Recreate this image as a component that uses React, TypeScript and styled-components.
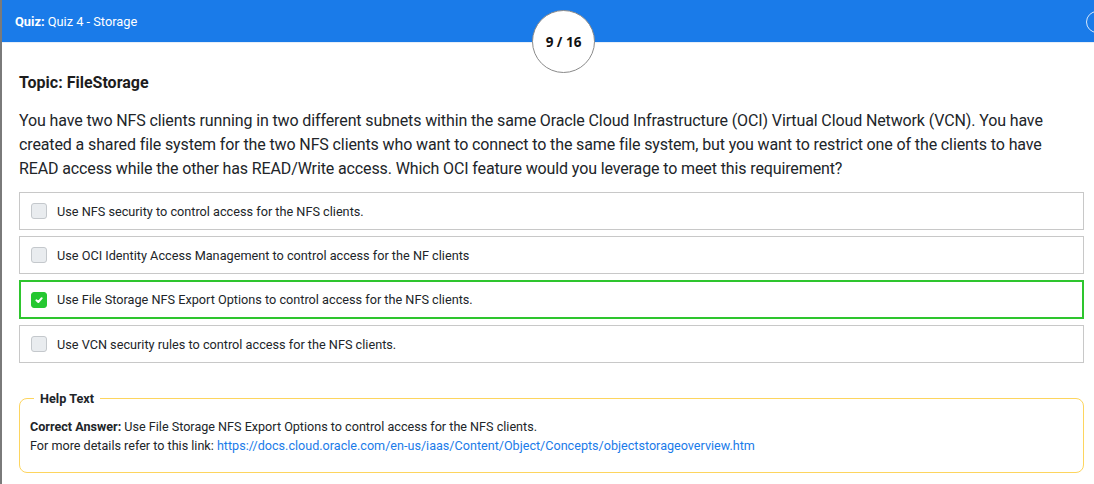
import React from 'react'
import styled, { createGlobalStyle } from 'styled-components'

const Global = createGlobalStyle`
  body {
    margin: 0;
    background: #fff;
    font-family: Roboto, "Liberation Sans", sans-serif;
    color: #212529;
  }
`

const Dialog = styled.div`
  position: relative;
  width: 1094px;
  height: 484px;
  box-sizing: border-box;
  border-left: 2px solid #7a7a7a;
  overflow: hidden;
`

const Header = styled.div`
  height: 43px;
  background: #1a7be9;
  color: #fff;
  font-size: 12.8px;
  display: flex;
  align-items: center;
  padding-left: 13px;
  padding-top: 1px;
  box-sizing: border-box;
  position: relative;
  border-bottom: 1px solid #e6eef8;
`

const CloseCircle = styled.div`
  position: absolute;
  right: -14px;
  top: 11px;
  width: 20px;
  height: 20px;
  border: 1.5px solid #d8e8fb;
  border-radius: 50%;
`

const Counter = styled.div`
  position: absolute;
  left: 530px;
  top: 10px;
  width: 63px;
  height: 63px;
  border-radius: 50%;
  background: #fff;
  border: 1px solid #8a8a8a;
  display: flex;
  align-items: center;
  justify-content: center;
  font-family: "Open Sans", "Noto Sans", sans-serif;
  font-weight: 700;
  font-size: 13.5px;
  color: #111;
  box-sizing: border-box;
`

const Body = styled.div`
  padding: 30px 10px 0 17px;
`

const Topic = styled.div`
  font-weight: 700;
  font-size: 16px;
  line-height: 20px;
  color: #1d1d1d;
`

const Question = styled.p`
  margin: 16px 0 11px;
  font-size: 16px;
  letter-spacing: -0.12px;
  line-height: 24px;
  color: #212529;
`

const Options = styled.div`
  display: flex;
  flex-direction: column;
  gap: 6px;
`

const Option = styled.label<{ $checked?: boolean }>`
  display: flex;
  align-items: center;
  gap: 10px;
  box-sizing: border-box;
  height: ${p => (p.$checked ? '39px' : '38px')};
  padding-left: ${p => (p.$checked ? '10px' : '11px')};
  border: ${p => (p.$checked ? '2px solid #2ec52e' : '1px solid #c8c8c8')};
  font-size: 12.7px;
  color: #212529;
`

const Box = styled.span<{ $checked?: boolean }>`
  width: 16px;
  height: 16px;
  flex: none;
  box-sizing: border-box;
  border-radius: 3px;
  background: ${p => (p.$checked ? '#25c731' : '#e9ecef')};
  border: 1px solid ${p => (p.$checked ? '#25c731' : '#c4c8cc')};
  display: flex;
  align-items: center;
  justify-content: center;
`

const Help = styled.fieldset`
  margin: 26px 0 0;
  padding: 9px 10px 17px;
  border: 1px solid #fdd55f;
  border-radius: 8px;
  font-size: 12.6px;
  line-height: 19px;
  min-width: 0;
`

const Legend = styled.legend`
  font-weight: 700;
  padding: 0 6px;
  margin-left: 4px;
  font-size: 12.7px;
`

const Strong = styled.b`
  font-weight: 700;
`

const Link = styled.a`
  color: #1a7be9;
  text-decoration: none;
`

const options = [
  'Use NFS security to control access for the NFS clients.',
  'Use OCI Identity Access Management to control access for the NF clients',
  'Use File Storage NFS Export Options to control access for the NFS clients.',
  'Use VCN security rules to control access for the NFS clients.',
]

export default function App() {
  return (
    <Dialog>
      <Global />
      <Header>
        <span><Strong>Quiz:</Strong> Quiz 4 - Storage</span>
        <CloseCircle />
      </Header>
      <Counter>9 / 16</Counter>
      <Body>
        <Topic>Topic: FileStorage</Topic>
        <Question>
          You have two NFS clients running in two different subnets within the same Oracle Cloud Infrastructure (OCI) Virtual Cloud Network (VCN). You have created a shared file system for the two NFS clients who want to connect to the same file system, but you want to restrict one of the clients to have READ access while the other has READ/Write access. Which OCI feature would you leverage to meet this requirement?
        </Question>
        <Options>
          {options.map((o, i) => {
            const checked = i === 2
            return (
              <Option key={i} $checked={checked}>
                <Box $checked={checked}>
                  {checked && (
                    <svg width="10" height="10" viewBox="0 0 10 10">
                      <path d="M2.4 5.3 L4.3 7 L7.7 3.2" fill="none" stroke="#fff" strokeWidth="2" strokeLinecap="round" strokeLinejoin="round" />
                    </svg>
                  )}
                </Box>
                {o}
              </Option>
            )
          })}
        </Options>
        <Help>
          <Legend>Help Text</Legend>
          <div><Strong>Correct Answer:</Strong> Use File Storage NFS Export Options to control access for the NFS clients.</div>
          <div>
            For more details refer to this link:{' '}
            <Link href="#">https://docs.cloud.oracle.com/en-us/iaas/Content/Object/Concepts/objectstorageoverview.htm</Link>
          </div>
        </Help>
      </Body>
    </Dialog>
  )
}
